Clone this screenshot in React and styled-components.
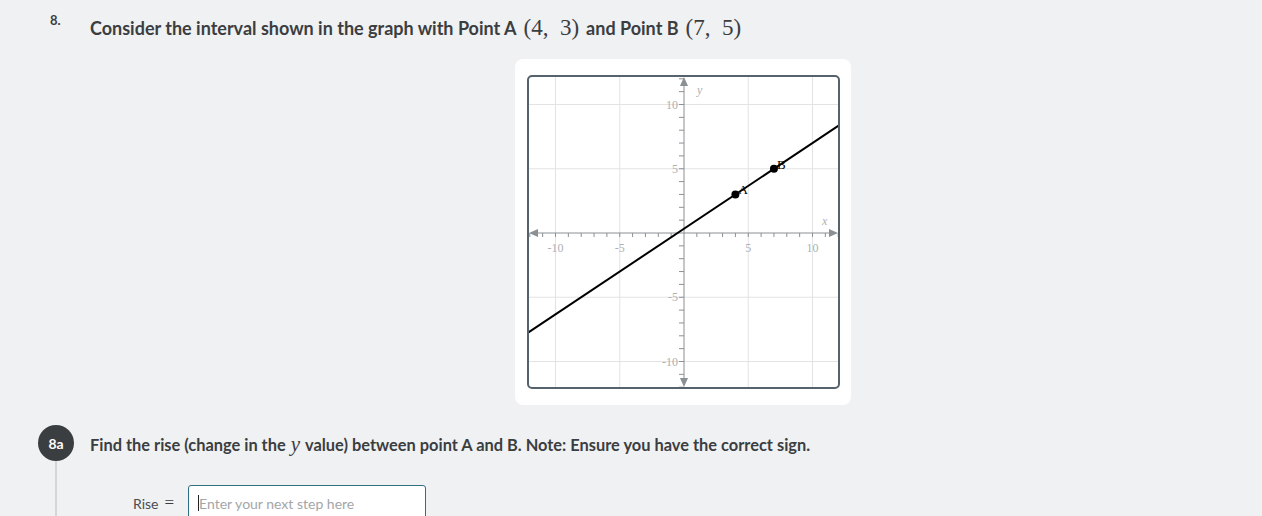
import React from "react";
import styled, { createGlobalStyle } from "styled-components";

const Global = createGlobalStyle`
  html, body { margin: 0; padding: 0; background: #f0f1f3; }
  body { font-family: Lato, "Liberation Sans", sans-serif; color: #3b3e41; overflow: hidden; }
`;

const Page = styled.div`
  width: 1262px;
  height: 516px;
  overflow: hidden;
  background: #f0f1f3;
`;

const QuestionRow = styled.div`
  display: flex;
  padding-top: 13px;
`;

const QNumber = styled.div`
  width: 40px;
  padding-left: 50px;
  font-size: 13px;
  font-weight: 700;
  color: #3b3e41;
  line-height: 14px;
`;

const QBody = styled.div`
  flex: 1;
  margin-right: -14px;
`;

const Prompt = styled.div`
  font-size: ${(p) => p.size || 17}px;
  font-weight: 700;
  color: #3b3e41;
  line-height: 30px;
`;

const Math = styled.span`
  font-family: "Liberation Serif", "DejaVu Serif", serif;
  font-weight: 400;
  font-size: ${(p) => p.size || 23}px;
  font-style: ${(p) => (p.italic ? "italic" : "normal")};
  margin: 0 ${(p) => (p.gap === undefined ? 7 : p.gap)}px;
  color: #3b3e41;
`;

const GraphWrap = styled.div`
  display: flex;
  justify-content: center;
  margin-top: 16px;
`;

const GraphCard = styled.div`
  background: #ffffff;
  border-radius: 8px;
  padding: 16px 11px 16px 12px;
`;

const GraphFrame = styled.div`
  width: 313px;
  height: 314px;
  box-sizing: border-box;
  border: 2px solid #56636d;
  border-radius: 5px;
  overflow: hidden;
  background: #fff;
`;

const StepRow = styled.div`
  display: flex;
  align-items: flex-start;
  margin-top: 20px;
`;

const StepRail = styled.div`
  width: 90px;
  box-sizing: border-box;
  padding-left: 38px;
  display: flex;
  flex-direction: column;
  align-items: flex-start;
`;

const Badge = styled.div`
  width: 36px;
  height: 36px;
  border-radius: 50%;
  background: #3b3e41;
  color: #fff;
  font-size: 14px;
  font-weight: 700;
  display: flex;
  align-items: center;
  justify-content: center;
`;

const RailLine = styled.div`
  width: 2px;
  height: 80px;
  margin-left: 17px;
  background: #d4d5d7;
`;

const StepBody = styled.div`
  flex: 1;
  padding-top: 4px;
`;

const AnswerRow = styled.div`
  display: flex;
  align-items: center;
  margin-top: 25px;
  margin-left: 43px;
  gap: 8px;
`;

const Label = styled.span`
  font-size: 14px;
  color: #4a4d50;
  display: flex;
  align-items: center;
`;

const Input = styled.div`
  width: 238px;
  height: 36px;
  box-sizing: border-box;
  border: 1px solid #2f6f82;
  border-radius: 3px;
  background: #fff;
  display: flex;
  align-items: center;
  padding-left: 9px;
  font-size: 14px;
  color: #a3a6a9;
`;

const Caret = styled.span`
  display: inline-block;
  width: 1px;
  height: 16px;
  background: #222;
`;

const S = 12.85;
const OX = 155;
const OY = 156;
const px = (x) => OX + x * S;
const py = (y) => OY - y * S;

function Graph() {
  const grid = [-10, -5, 5, 10];
  const ticks = [];
  for (let i = -12; i <= 12; i++) if (i !== 0) ticks.push(i);
  const fx = (x) => (2 / 3) * x + 1 / 3;
  const x0 = -12.2, x1 = 12.3;
  return (
    <svg width="309" height="310" viewBox="0 0 309 310">
      {grid.map((g) => (
        <g key={g}>
          <line x1={px(g)} y1={0} x2={px(g)} y2={310} stroke="#e3e3e3" strokeWidth="1" />
          <line x1={0} y1={py(g)} x2={309} y2={py(g)} stroke="#e3e3e3" strokeWidth="1" />
        </g>
      ))}
      <line x1={6} y1={OY} x2={303} y2={OY} stroke="#8b9094" strokeWidth="1" />
      <line x1={OX} y1={6} x2={OX} y2={304} stroke="#8b9094" strokeWidth="1" />
      <polygon points={`0,${OY} 9,${OY - 4} 9,${OY + 4}`} fill="#8b9094" />
      <polygon points={`309,${OY} 300,${OY - 4} 300,${OY + 4}`} fill="#8b9094" />
      <polygon points={`${OX},0 ${OX - 4},9 ${OX + 4},9`} fill="#8b9094" />
      <polygon points={`${OX},310 ${OX - 4},301 ${OX + 4},301`} fill="#8b9094" />
      {ticks.map((t) => (
        <g key={t}>
          <line x1={px(t)} y1={OY} x2={px(t)} y2={OY + 4} stroke="#8b9094" strokeWidth="1" />
          <line x1={OX - 5} y1={py(t)} x2={OX} y2={py(t)} stroke="#8b9094" strokeWidth="1" />
        </g>
      ))}
      <g fontFamily="'Liberation Serif', 'DejaVu Serif', serif" fontSize="12" fill="#adb0b3">
        {grid.map((g) => (
          <text key={"x" + g} x={px(g)} y={OY + 19} textAnchor="middle">
            {g}
          </text>
        ))}
        {grid.map((g) => (
          <text key={"y" + g} x={OX - 6} y={py(g) + 4} textAnchor="end">
            {g}
          </text>
        ))}
        <text x={OX + 13} y={17} fontStyle="italic">y</text>
        <text x={293} y={148} fontStyle="italic">x</text>
      </g>
      <line x1={px(x0)} y1={py(fx(x0))} x2={px(x1)} y2={py(fx(x1))} stroke="#000" strokeWidth="2" />
      <circle cx={px(4)} cy={py(3)} r="4" fill="#000" />
      <circle cx={px(7)} cy={py(5)} r="4" fill="#000" />
      <g fontFamily="'Liberation Serif', 'DejaVu Serif', serif" fontSize="13" fill="#000">
        <text x={px(4) + 3} y={py(3)}>A</text>
        <text x={px(7) + 3} y={py(5)}>B</text>
      </g>
    </svg>
  );
}

export default function App() {
  return (
    <Page>
      <Global />
      <QuestionRow>
        <QNumber>8.</QNumber>
        <QBody>
          <Prompt size={18}>
            Consider the interval shown in the graph with Point A
            <Math>(4,&nbsp; 3)</Math>
            and Point B
            <Math>(7,&nbsp; 5)</Math>
          </Prompt>
          <GraphWrap>
            <GraphCard>
              <GraphFrame>
                <Graph />
              </GraphFrame>
            </GraphCard>
          </GraphWrap>
        </QBody>
      </QuestionRow>
      <StepRow>
        <StepRail>
          <Badge>8a</Badge>
          <RailLine />
        </StepRail>
        <StepBody>
          <Prompt size={16.4}>
            Find the rise (change in the<Math size={21} italic gap={5}>y</Math>value) between point A and B. Note: Ensure you have the correct sign.
          </Prompt>
          <AnswerRow>
            <Label>
              Rise<Math size={17} gap={6}>=</Math>
            </Label>
            <Input>
              <Caret />
              Enter your next step here
            </Input>
          </AnswerRow>
        </StepBody>
      </StepRow>
    </Page>
  );
}
